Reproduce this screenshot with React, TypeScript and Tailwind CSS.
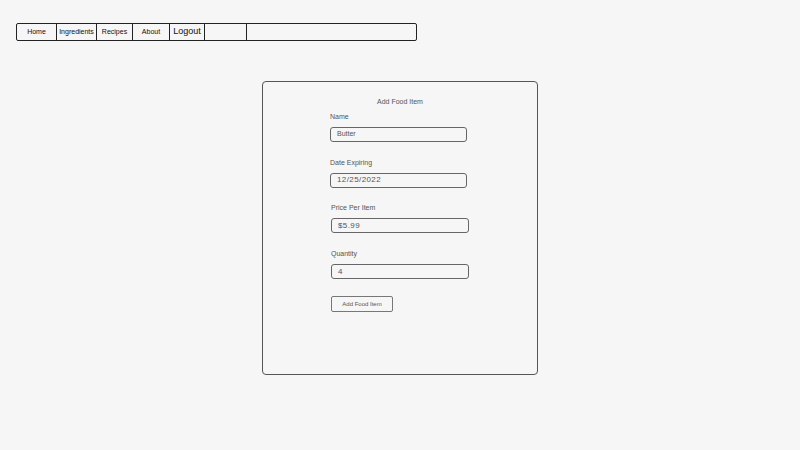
import React from "react";

const navItems = [
  { label: "Home", w: "w-[40px]", text: "text-[7px]" },
  { label: "Ingredients", w: "w-[40px]", text: "text-[7px]" },
  { label: "Recipes", w: "w-[36px]", text: "text-[7px]" },
  { label: "About", w: "w-[37px]", text: "text-[7px]" },
  { label: "Logout", w: "w-[35px]", text: "text-[9px]" },
  { label: "", w: "w-[42px]", text: "text-[7px]" },
];

const fields = [
  { label: "Name", value: "Butter", mono: false, left: "ml-0", w: "w-[137px]" },
  { label: "Date Expiring", value: "12/25/2022", mono: true, left: "ml-0", w: "w-[137px]" },
  { label: "Price Per Item", value: "$5.99", mono: true, left: "ml-px", w: "w-[138px]" },
  { label: "Quantity", value: "4", mono: true, left: "ml-px", w: "w-[138px]" },
];

const Field: React.FC<{ label: string; value: string; mono: boolean; left: string; w: string }> = ({
  label,
  value,
  mono,
  left,
  w,
}) => (
  <div className={`flex flex-col ${left}`}>
    <p className="h-[10px] text-[7px] leading-[10px] text-[#555]">{label}</p>
    <div
      className={`mt-[5px] flex h-[15px] ${w} items-center rounded-[3px] border border-[#666] px-[6px] text-[#555] ${
        mono ? "text-[8px] tracking-[0.4px]" : "text-[7px]"
      }`}
    >
      {value}
    </div>
  </div>
);

export default function App() {
  return (
    <div
      className="min-h-[450px] w-full bg-[#f6f6f6] pl-[16px] pt-[23px]"
      style={{ fontFamily: '"Liberation Sans", Arial, sans-serif' }}
    >
      <nav className="flex h-[18px] w-[401px] rounded-[2px] border-[1.5px] border-[#222]">
        {navItems.map((item, i) => (
          <div
            key={i}
            className={`flex ${item.w} items-center justify-center border-r border-[#222] ${item.text} text-[#111]`}
          >
            {item.label}
          </div>
        ))}
        <div className="flex-1" />
      </nav>

      <div className="ml-[246px] mt-[40px] h-[294px] w-[276px] rounded-[4px] border-[1.5px] border-[#555] pt-[15px]">
        <p className="text-center text-[7px] leading-[10px] text-[#555]">Add Food Item</p>
        <div className="ml-[67px] mt-[5px] flex flex-col gap-[15.7px]">
          {fields.map((f) => (
            <Field key={f.label} {...f} />
          ))}
          <button className="mt-[1.5px] ml-px flex h-[16px] w-[62px] items-center justify-center rounded-[2px] border border-[#777] text-[6px] text-[#555]">
            Add Food Item
          </button>
        </div>
      </div>
    </div>
  );
}
